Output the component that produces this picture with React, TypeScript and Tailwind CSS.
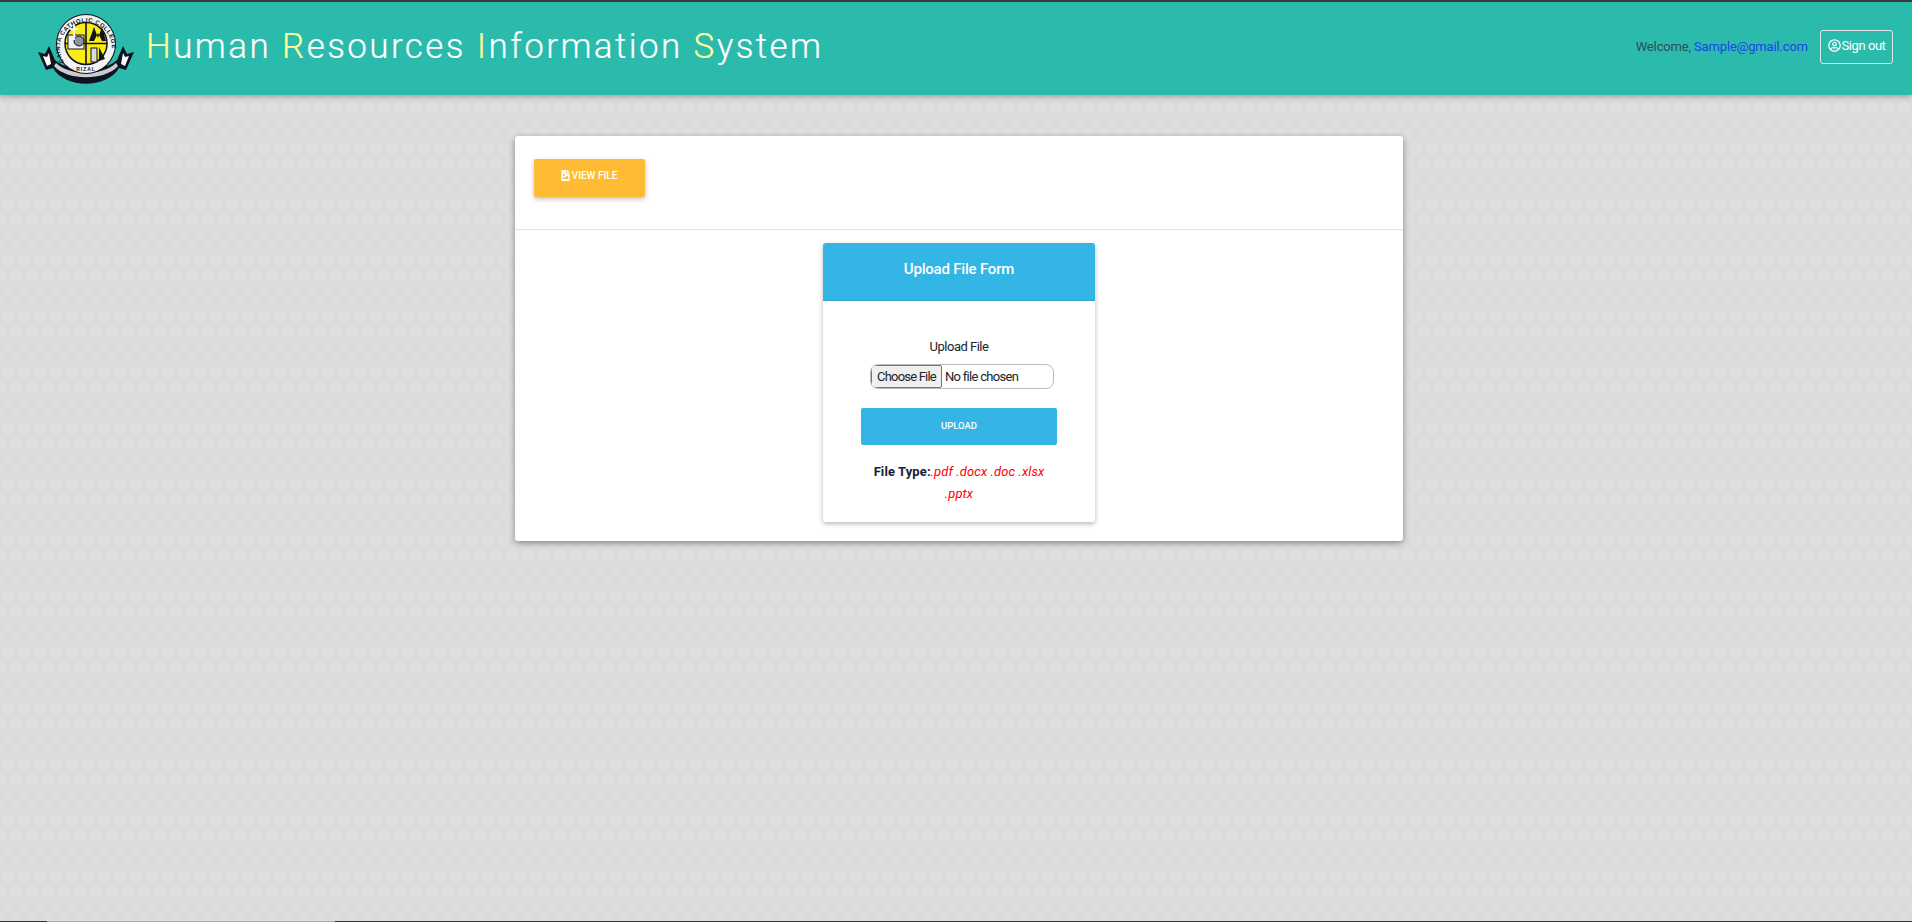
import { FaFileImage, FaRegUserCircle } from "react-icons/fa";

const Logo = () => (
    <svg width="98" height="72" viewBox="0 0 98 72" className="mt-[3px] shrink-0">
        <defs>
            <path id="ringTop" d="M27 48 A26 26 0 1 1 71 48" />
        </defs>
        {/* ribbon */}
        <path d="M1 38 L8 40 L12 32 L18 46 C30 58 68 58 80 46 L86 32 L90 40 L97 38 L89 56 L82 54 C70 75 28 75 16 54 L9 56 Z" fill="#10131f" />
        <path d="M6 42 L10 43 L12 39 L14 50 L10 52 Z M92 42 L88 43 L86 39 L84 50 L88 52 Z" fill="#fff" />
        <path d="M17 52 C30 67 68 67 81 52 L79 49 C66 62 32 62 19 49 Z" fill="#c9ccd0" />
        <circle cx="49" cy="30" r="30" fill="#10131f" />
        <circle cx="49" cy="30" r="29" fill="#f4f4f4" />
        <text fontFamily="Liberation Sans" fontSize="6" fontWeight="700" fill="#10131f" letterSpacing="0.5">
            <textPath href="#ringTop">CAINTA CATHOLIC COLLEGE</textPath>
        </text>
        <text x="49" y="57" textAnchor="middle" fontFamily="Liberation Sans" fontSize="5" fontWeight="700" fill="#10131f" letterSpacing="1">
            RIZAL
        </text>
        <circle cx="49" cy="29.5" r="21" fill="#f8ec14" stroke="#10131f" strokeWidth="1.5" />
        <path d="M49 9 V50 M28 29.5 H70" stroke="#10131f" strokeWidth="1.6" />
        <rect x="31" y="21" width="16" height="14" fill="#f2f2f2" stroke="#10131f" />
        <circle cx="42" cy="27" r="5" fill="#8d939b" stroke="#10131f" />
        <path d="M37 11 V26 M33 15 H41" stroke="#f2f2f2" strokeWidth="2" />
        <path d="M52 27 L57 13 L61 24 L65 13 L69 27 H65 L61 19 L57 27 Z" fill="#10131f" />
        <rect x="54" y="34" width="6" height="14" fill="#d8dbdf" stroke="#10131f" />
        <path d="M62 33 L68 45 L62 47 Z" fill="#10131f" />
    </svg>
);

const Title = () => (
    <h1 className="mb-[5px] ml-[11px] text-[35px] leading-none font-light tracking-[2.4px] text-white [-webkit-text-stroke:0.2px_white]">
        <span className="text-[#ffff99] [-webkit-text-stroke:0.2px_#ffff99]">H</span>uman{" "}
        <span className="text-[#ffff99] [-webkit-text-stroke:0.2px_#ffff99]">R</span>esources{" "}
        <span className="text-[#ffff99] [-webkit-text-stroke:0.2px_#ffff99]">I</span>nformation{" "}
        <span className="text-[#ffff99] [-webkit-text-stroke:0.2px_#ffff99]">S</span>ystem
    </h1>
);

const Header = () => (
    <header className="relative z-10 flex h-[95px] items-center border-t-2 border-[#3a3a3a] bg-[#2bbbad] pr-[19px] pl-[37px] shadow-[0_2px_5px_rgba(0,0,0,0.26)]">
        <Logo />
        <Title />
        <div className="mb-[3px] ml-auto flex items-center text-[13px] tracking-[-0.15px]">
            <span className="text-[#2d4f55]">
                Welcome, <a className="text-[#1a45e8]">Sample@gmail.com</a>
            </span>
            <button className="ml-[12px] flex h-[34px] w-[73px] items-center justify-center gap-[1px] rounded-[3px] border border-[#dfe8e6] pb-[3px] text-[13px] tracking-[-0.45px] text-white">
                <FaRegUserCircle size={13} />
                Sign out
            </button>
        </div>
    </header>
);

const UploadCard = () => (
    <div className="mx-auto w-[272px] overflow-hidden rounded-[3px] bg-white shadow-[0_2px_5px_rgba(0,0,0,0.28)]">
        <div className="flex h-[58px] items-center justify-center border-b border-[#2fa6d2] bg-[#33b5e5] pb-[5px] text-[15px] font-medium tracking-[-0.2px] text-white">
            Upload File Form
        </div>
        <div className="flex flex-col items-center px-[38px] pt-[36px] pb-[17px]">
            <label className="text-[13px] leading-[20px] tracking-[-0.5px] text-[#212529]">Upload File</label>
            <input
                type="file"
                className="mt-[7px] ml-[6px] h-[25px] w-[184px] rounded-[8px] border border-[#bbb] text-[13px] tracking-[-0.7px] text-[#212529] file:mr-[3px] file:h-[23px] file:rounded-[2px] file:border file:border-[#767676] file:bg-[#efefef] file:px-[5px] file:text-[13px] file:tracking-[-0.8px]"
            />
            <button className="mt-[19px] h-[37px] w-[196px] shrink-0 rounded-[2px] bg-[#33b5e5] text-[9.5px] font-medium text-white">
                UPLOAD
            </button>
            <p className="mt-[16px] w-[190px] text-center text-[13px] leading-[22px] tracking-[0.1px]">
                <strong className="font-bold text-[#1a2033]">File Type:</strong>
                <em className="font-normal text-[#ff0000]">.pdf .docx .doc .xlsx .pptx</em>
            </p>
        </div>
    </div>
);

export default function App() {
    return (
        <div className="relative h-[922px] overflow-hidden bg-[#dcdcdc] font-['Roboto',sans-serif]">
            {/* hex texture of the page background */}
            <svg className="absolute inset-0 h-full w-full" aria-hidden="true">
                <defs>
                    <pattern id="hex" width="16" height="28" patternUnits="userSpaceOnUse">
                        <path d="M8 1 L15 5 V13 L8 17 L1 13 V5 Z" fill="#dedede" stroke="#d9d9d9" strokeWidth="1" />
                        <path d="M0 15 L7 19 V27 L0 31 M16 15 L9 19 V27 L16 31" fill="#dedede" stroke="#d9d9d9" strokeWidth="1" />
                    </pattern>
                </defs>
                <rect width="100%" height="100%" fill="url(#hex)" />
            </svg>
            <div className="relative">
                <Header />
                <main className="mt-[41px] ml-[515px] w-[888px] rounded-[3px] bg-white pb-[19px] shadow-[0_2px_6px_rgba(0,0,0,0.4)]">
                    <div className="h-[94px] border-b border-[#e4e4e4] pt-[23px] pl-[19px]">
                        <button className="flex h-[38px] w-[111px] items-center justify-center gap-[1px] rounded-[2px] bg-[#ffbb33] pr-[2px] pb-[5px] text-[10px] font-medium text-white shadow-[0_2px_5px_rgba(0,0,0,0.26)]">
                            <FaFileImage size={11} />
                            VIEW FILE
                        </button>
                    </div>
                    <div className="pt-[13px]">
                        <UploadCard />
                    </div>
                </main>
            </div>
            <div className="absolute right-0 bottom-0 left-0 flex h-[1px] bg-[#333]">
                <div className="ml-[47px] h-full w-[288px] bg-[#aaa]" />
            </div>
        </div>
    );
}
